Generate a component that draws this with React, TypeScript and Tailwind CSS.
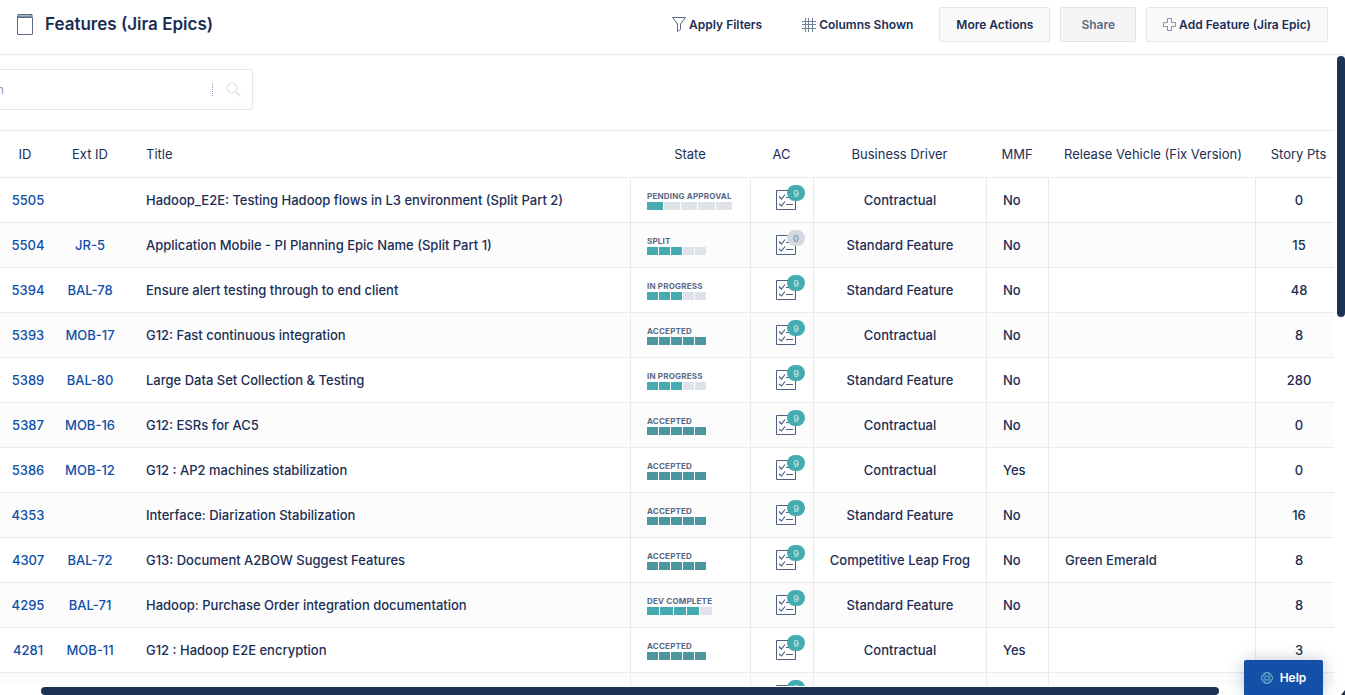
import React from 'react';

type Row = {
  id: string;
  ext: string;
  title: string;
  state: string;
  done: number;
  final?: boolean;
  badge: string;
  driver: string;
  mmf: string;
  release: string;
  points: string;
};

const rows: Row[] = [
  { id: '5505', ext: '', title: 'Hadoop_E2E: Testing Hadoop flows in L3 environment (Split Part 2)', state: 'PENDING APPROVAL', done: 1, badge: '9', driver: 'Contractual', mmf: 'No', release: '', points: '0' },
  { id: '5504', ext: 'JR-5', title: 'Application Mobile - PI Planning Epic Name (Split Part 1)', state: 'SPLIT', done: 3, badge: '0', driver: 'Standard Feature', mmf: 'No', release: '', points: '15' },
  { id: '5394', ext: 'BAL-78', title: 'Ensure alert testing through to end client', state: 'IN PROGRESS', done: 3, badge: '9', driver: 'Standard Feature', mmf: 'No', release: '', points: '48' },
  { id: '5393', ext: 'MOB-17', title: 'G12: Fast continuous integration', state: 'ACCEPTED', done: 5, final: true, badge: '9', driver: 'Contractual', mmf: 'No', release: '', points: '8' },
  { id: '5389', ext: 'BAL-80', title: 'Large Data Set Collection & Testing', state: 'IN PROGRESS', done: 3, badge: '9', driver: 'Standard Feature', mmf: 'No', release: '', points: '280' },
  { id: '5387', ext: 'MOB-16', title: 'G12: ESRs for AC5', state: 'ACCEPTED', done: 5, final: true, badge: '9', driver: 'Contractual', mmf: 'No', release: '', points: '0' },
  { id: '5386', ext: 'MOB-12', title: 'G12 : AP2 machines stabilization', state: 'ACCEPTED', done: 5, final: true, badge: '9', driver: 'Contractual', mmf: 'Yes', release: '', points: '0' },
  { id: '4353', ext: '', title: 'Interface: Diarization Stabilization', state: 'ACCEPTED', done: 5, final: true, badge: '9', driver: 'Standard Feature', mmf: 'No', release: '', points: '16' },
  { id: '4307', ext: 'BAL-72', title: 'G13: Document A2BOW Suggest Features', state: 'ACCEPTED', done: 5, final: true, badge: '9', driver: 'Competitive Leap Frog', mmf: 'No', release: 'Green Emerald', points: '8' },
  { id: '4295', ext: 'BAL-71', title: 'Hadoop: Purchase Order integration documentation', state: 'DEV COMPLETE', done: 4, badge: '9', driver: 'Standard Feature', mmf: 'No', release: '', points: '8' },
  { id: '4281', ext: 'MOB-11', title: 'G12 : Hadoop E2E encryption', state: 'ACCEPTED', done: 5, final: true, badge: '9', driver: 'Contractual', mmf: 'Yes', release: '', points: '3' },
  { id: '', ext: '', title: '', state: '', done: 0, badge: '9', driver: '', mmf: '', release: '', points: '' },
];

function PageIcon() {
  return (
    <svg width="16" height="21" viewBox="0 0 16 21" fill="none" stroke="#5a6b88" aria-hidden="true">
      <path d="M1 .5h14v2.500H1z" fill="#a9b6c4" />
      <path d="M.5 3V20a.5.5 0 0 0 .5.500H15a.5.5 0 0 0 .5-.5V3.500H2A1.500 1.500 0 0 1 .5 2" />
    </svg>
  );
}

function FilterIcon() {
  return (
    <svg width="14" height="15" viewBox="0 0 14 15" fill="none" stroke="#5a6b88" strokeLinejoin="round" aria-hidden="true">
      <path d="M.5.500h13L8.500 7v5.500l-3 2V7z" />
    </svg>
  );
}

function ColumnsIcon() {
  return (
    <svg width="14" height="14" viewBox="0 0 14 14" fill="none" stroke="#71819c" aria-hidden="true">
      <path d="M3.500 0v14M6.500 0v14M10.500 0v14M0 3.500h14M0 6.500h14M0 10.500h14" />
    </svg>
  );
}

function PlusIcon() {
  return (
    <svg width="13" height="13" viewBox="0 0 13 13" fill="none" stroke="#8291ad" aria-hidden="true">
      <path d="M4.500.500h4v4h4v4h-4v4h-4v-4h-4v-4h4z" />
    </svg>
  );
}

function SearchIcon() {
  return (
    <svg width="15" height="15" viewBox="0 0 15 15" fill="none" stroke="#e0e2e6" aria-hidden="true">
      <circle cx="6" cy="6" r="5" strokeWidth="1.200" />
      <path d="M9.500 9.500l5 5" strokeWidth="1.600" />
    </svg>
  );
}

function HelpIcon() {
  return (
    <svg width="12" height="12" viewBox="0 0 12 12" fill="none" stroke="#7fd0d6" aria-hidden="true">
      <circle cx="6" cy="6" r="5.400" strokeWidth=".9" />
      <circle cx="6" cy="6" r="2.200" strokeWidth=".9" />
      <path d="M4.600.800L2.400 5M7.400.800L9.600 5M4.600 11.200L2.400 7M7.400 11.200L9.600 7" strokeWidth=".7" />
    </svg>
  );
}

function Criteria({ count }: { count: string }) {
  return (
    <button type="button" aria-label="Acceptance criteria" className="relative block size-5">
      <svg width="20" height="20" viewBox="0 0 20 20" fill="none" stroke="#4f5f80" aria-hidden="true">
        <path d="M.5.500h19v19H.5z" />
        <path d="M3 6.500l2.500 2.500L9 4.500M3 14l2.500 2L9 11.500" strokeWidth="1.200" />
        <path d="M10 7.500h7M10 14.500h7" />
      </svg>
      <span
        className={`absolute -top-[5px] left-[11px] flex h-4 w-[18px] items-center justify-center rounded-full text-[9px] leading-none ${
          count === '0' ? 'bg-[#d3d8e1] text-[#8391aa]' : 'bg-[#44acb0] text-[#c5e5ea]'
        }`}
      >
        {count}
      </span>
    </button>
  );
}

function State({ row }: { row: Row }) {
  return (
    <div className="inline-grid min-w-[59px] gap-px align-middle">
      <span className="text-[8px] leading-[10px] font-bold tracking-wide whitespace-nowrap text-[#5a6985]">{row.state}</span>
      <span className="flex h-2 gap-px">
        {[0, 1, 2, 3, 4].map((i) => (
          <span
            key={i}
            className={`flex-1 ${row.final ? 'bg-[#4b969f]' : i < row.done ? 'bg-[#44acb0]' : 'bg-[#dfe3e9]'}`}
          />
        ))}
      </span>
    </div>
  );
}

const th = 'h-[47px] border-b border-[#e9eaec] p-0 pt-0.5 font-normal';
const td = 'h-[45px] border-b border-[#e9eaec] p-0 font-medium';
const text = 'pt-0.5';
const side = 'border-l border-[#e9eaec]';

export default function App() {
  return (
    <div className="relative flex h-screen flex-col overflow-hidden bg-white font-['Inter','Liberation_Sans',sans-serif] text-[13px] text-[#1b2e54]">
      <header className="flex h-[55px] shrink-0 items-center border-b border-[#e9eaec] px-[17px] pb-[5px]">
        <PageIcon />
        <h1 className="ml-3 text-[17px] font-semibold">Features (Jira Epics)</h1>
        <div className="ml-auto flex items-center text-[12px] font-semibold">
          <button type="button" className="mr-10 flex items-center gap-[3px]">
            <FilterIcon />
            Apply Filters
          </button>
          <button type="button" className="mr-[26px] flex items-center gap-[3px]">
            <ColumnsIcon />
            Columns Shown
          </button>
          <button type="button" className="mr-[10px] h-[35px] rounded-xs border border-[#e6e7ea] bg-[#fafafa] px-4">
            More Actions
          </button>
          <button type="button" disabled className="mr-[10px] h-[35px] rounded-xs border border-[#e3e4e8] bg-[#f5f5f6] px-5 text-[#5a6985]">
            Share
          </button>
          <button type="button" className="flex h-[35px] items-center gap-[3px] rounded-xs border border-[#e6e7ea] bg-[#fafafa] px-4">
            <PlusIcon />
            Add Feature (Jira Epic)
          </button>
        </div>
      </header>

      <div className="flex shrink-0 pt-[14px] pb-5">
        <div className="-ml-14 flex h-[41px] w-[309px] items-center rounded-[3px] border border-[#e6e7ea] pr-[11px] pl-[19px]">
          <input
            type="text"
            aria-label="Search"
            placeholder="Search"
            className="min-w-0 flex-1 pt-px text-[12px] outline-none placeholder:text-[#8c9bb5]"
          />
          <span className="mr-[13px] h-[13px] border-l border-dotted border-[#8c9bc0]" />
          <button type="button" aria-label="Run search">
            <SearchIcon />
          </button>
        </div>
      </div>

      <main className="mr-[11px] min-h-0 flex-1 overflow-hidden border-t border-[#e9eaec]">
        <table className="w-full table-fixed border-separate border-spacing-0">
          <colgroup>
            <col className="w-[50px]" />
            <col className="w-20" />
            <col />
            <col className="w-[120px]" />
            <col className="w-[63px]" />
            <col className="w-[173px]" />
            <col className="w-[62px]" />
            <col className="w-[207px]" />
            <col className="w-[79px]" />
          </colgroup>
          <thead>
            <tr>
              <th className={th}>ID</th>
              <th className={th}>Ext ID</th>
              <th className={`${th} text-left`}>
                <span className="pl-4">Title</span>
              </th>
              <th className={th}>State</th>
              <th className={th}>AC</th>
              <th className={th}>Business Driver</th>
              <th className={th}>MMF</th>
              <th className={`${th} text-left whitespace-nowrap`}>
                <span className="pl-4">Release Vehicle (Fix Version)</span>
              </th>
              <th className={`${th} whitespace-nowrap`}>
                <span className="pl-2">Story Pts</span>
              </th>
            </tr>
          </thead>
          <tbody>
            {rows.map((row, i) => (
              <tr key={i} className="even:bg-[#fcfcfc]">
                <td className={`${td} text-center`}>
                  <div className={text}>
                    <a href="#feature" className="pl-1.5 text-[#0f4fa8]">{row.id}</a>
                  </div>
                </td>
                <td className={`${td} text-center`}>
                  <div className={text}>
                    <a href="#issue" className="text-[#0f4fa8]">{row.ext}</a>
                  </div>
                </td>
                <td className={`${td} whitespace-nowrap`}>
                  <div className={`${text} pl-4`}>{row.title}</div>
                </td>
                <td className={`${td} ${side}`}>
                  <div className="flex pl-4">{row.state && <State row={row} />}</div>
                </td>
                <td className={`${td} ${side}`}>
                  <div className="flex pl-[25px]">
                    <Criteria count={row.badge} />
                  </div>
                </td>
                <td className={`${td} ${side} text-center whitespace-nowrap`}>
                  <div className={text}>{row.driver}</div>
                </td>
                <td className={`${td} ${side}`}>
                  <div className={`${text} pl-4`}>{row.mmf}</div>
                </td>
                <td className={`${td} ${side}`}>
                  <div className={`${text} pl-4`}>{row.release}</div>
                </td>
                <td className={`${td} ${side} text-center`}>
                  <div className={`${text} pl-2`}>{row.points}</div>
                </td>
              </tr>
            ))}
          </tbody>
        </table>
      </main>

      <div className="absolute top-14 right-0 h-[261px] w-2 rounded-full bg-[#203254]" />
      <div className="absolute right-0 bottom-0 left-0 h-[9px] bg-white" />
      <div className="absolute right-[126px] bottom-0 left-[41px] h-2 rounded-full bg-[#203254]" />
      <button
        type="button"
        className="absolute right-[22px] bottom-0 flex h-[35px] w-[79px] items-center justify-center gap-[7px] rounded-t-xs bg-[#1450a8] text-[12px] font-semibold text-white shadow-[0_0_16px_rgba(23,43,77,0.25)]"
      >
        <HelpIcon />
        Help
      </button>
      <svg className="absolute right-0 bottom-0" width="4" height="5" viewBox="0 0 4 5" aria-hidden="true">
        <path d="M4 0v5H0z" fill="#203254" />
      </svg>
    </div>
  );
}
